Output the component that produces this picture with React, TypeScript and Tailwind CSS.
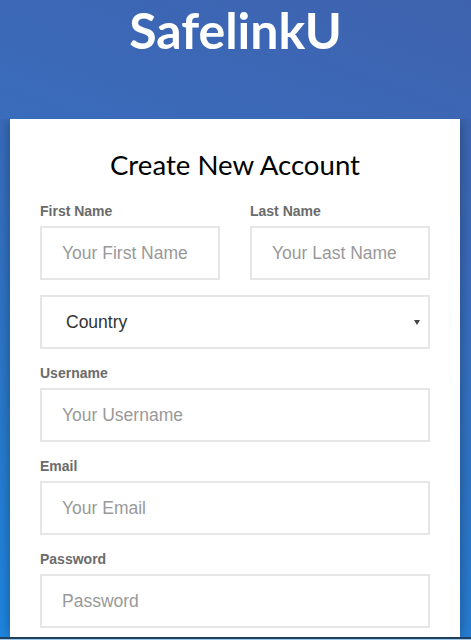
import { useState } from "react";

const fieldBox =
  "w-full h-[54px] border-2 border-[#e6e6e6] bg-white px-5 text-[17.5px] text-[#333] outline-none placeholder:text-[#999]";

const Label = ({ children }: { children: string }) => (
  <label className="block h-4 mb-[7px] text-[14px] leading-4 font-bold text-[#6b6b6b]">{children}</label>
);

const App = () => {
  const [form, setForm] = useState({ first: "", last: "", user: "", email: "", pass: "" });
  const set = (k: keyof typeof form) => (e: React.ChangeEvent<HTMLInputElement>) =>
    setForm({ ...form, [k]: e.target.value });

  return (
    <div
      className="h-[640px] w-full flex flex-col overflow-hidden bg-[linear-gradient(200deg,#3e62ae_0%,#3a6cbc_35%,#2a7acd_70%,#1e88e5_100%)]"
      style={{ fontFamily: "Arial, 'Liberation Sans', sans-serif" }}
    >
      {/* Header */}
      <header className="h-[119px] shrink-0">
        <h1 className="text-center text-white font-bold text-[50px] leading-[60px] font-['Lato',sans-serif]">
          SafelinkU
        </h1>
      </header>

      {/* Card */}
      <div className="flex-1 overflow-hidden pl-[10px] pr-[11px]">
        <div className="h-full bg-white px-[30px] pt-[29px] shadow-[0_0_14px_rgba(0,0,0,0.35)]">
          <h2 className="text-center text-black text-[27.6px] leading-[34px] font-['Lato',sans-serif] mb-[21px]">
            Create New Account
          </h2>

          <div className="grid grid-cols-2 gap-[30px]">
            <div>
              <Label>First Name</Label>
              <input className={fieldBox} placeholder="Your First Name" value={form.first} onChange={set("first")} />
            </div>
            <div>
              <Label>Last Name</Label>
              <input className={fieldBox} placeholder="Your Last Name" value={form.last} onChange={set("last")} />
            </div>
          </div>

          <div className="mt-[15px] h-[54px] border-2 border-[#e6e6e6] flex items-center pl-6 pr-[7px] text-[17.5px] text-[#333]">
            <span className="flex-1">Country</span>
            <svg width="6" height="5" viewBox="0 0 6 5" className="mr-[1px]">
              <polygon points="0,0 6,0 3,5" fill="#444" />
            </svg>
          </div>

          <div className="mt-4">
            <Label>Username</Label>
            <input className={fieldBox} placeholder="Your Username" value={form.user} onChange={set("user")} />
          </div>

          <div className="mt-4">
            <Label>Email</Label>
            <input className={fieldBox} placeholder="Your Email" value={form.email} onChange={set("email")} />
          </div>

          <div className="mt-4">
            <Label>Password</Label>
            <input
              type="password"
              className={fieldBox}
              placeholder="Password"
              value={form.pass}
              onChange={set("pass")}
            />
          </div>
        </div>
      </div>

      {/* bottom edge */}
      <div className="h-[2px] shrink-0 bg-[#1f3f5c]" />
      <div className="h-px shrink-0 bg-[#9cc9ea]" />
    </div>
  );
};

export default App;
